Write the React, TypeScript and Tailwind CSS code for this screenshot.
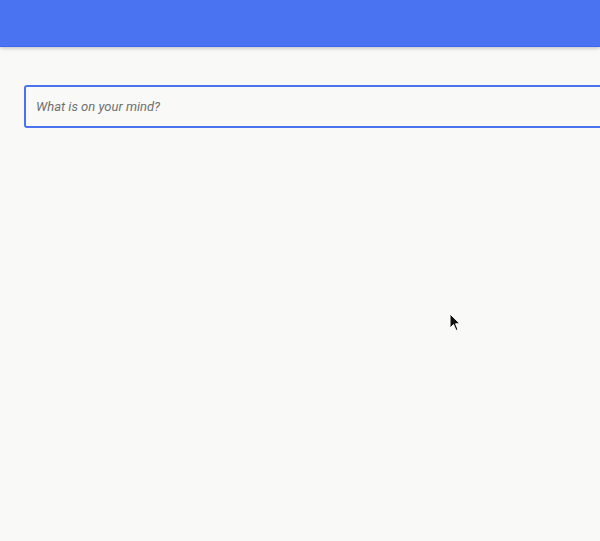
import React from 'react';

export default function App() {
  return (
    <div className="relative h-[541px] w-full overflow-hidden bg-[#f9f9f7]" style={{ fontFamily: 'Roboto, "Liberation Sans", sans-serif' }}>
      <header className="h-[47px] bg-[#4a73f2] border-b border-b-[#3d66f5] shadow-[0_1px_4px_rgba(0,0,0,0.25)]" />
      <div className="pt-[38px] pl-6">
        <input
          type="text"
          placeholder="What is on your mind?"
          className="w-[620px] h-[43px] rounded-[3px] border-2 border-[#4a73f2] bg-[#f9f9f7] px-[10px] text-[13px] italic text-gray-700 placeholder:text-[#707070] outline-none"
        />
      </div>
      <svg className="absolute left-[449px] top-[313px]" width="12" height="19" viewBox="0 0 12 19">
        <path d="M1 1 L1 15 L4.5 11.5 L7 17.5 L9 16.6 L6.6 10.8 L11 10.8 Z" fill="#111" stroke="#fff" strokeWidth="1" />
      </svg>
    </div>
  );
}
